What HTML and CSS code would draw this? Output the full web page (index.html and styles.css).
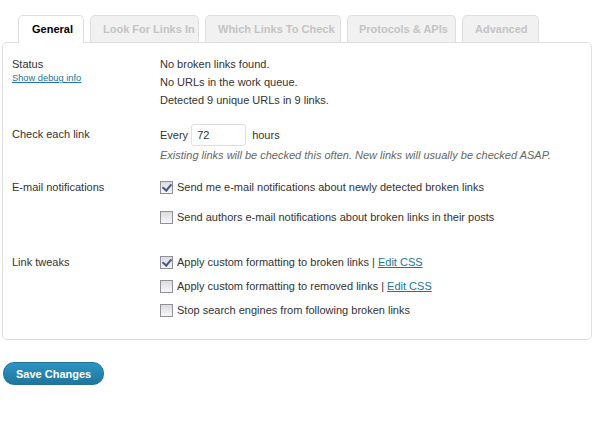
FILE: index.html
```html
<!DOCTYPE html>
<html lang="en">
<head>
    <meta charset="UTF-8">
    <title>Link Checker Settings</title>
    <link rel="stylesheet" href="styles.css">
</head>
<body>
    <div id="tabs">
        <div class="tab active">General</div>
        <div class="tab tab-look">Look For Links In</div>
        <div class="tab tab-which">Which Links To Check</div>
        <div class="tab tab-proto">Protocols &amp; APIs</div>
        <div class="tab tab-adv">Advanced</div>
    </div>

    <div id="panel">
        <div class="row row-status">
            <div class="label">
                Status
                <a href="#" class="debug">Show debug info</a>
            </div>
            <div class="value">
                <div class="line">No broken links found.</div>
                <div class="line">No URLs in the work queue.</div>
                <div class="line">Detected 9 unique URLs in 9 links.</div>
            </div>
        </div>

        <div class="row row-check">
            <div class="label">Check each link</div>
            <div class="value">
                <div class="every">
                    Every <input type="text" value="72" class="hours"> hours
                </div>
                <div class="hint">Existing links will be checked this often. New links will usually be checked ASAP.</div>
            </div>
        </div>

        <div class="row row-email">
            <div class="label">E-mail notifications</div>
            <div class="value">
                <label class="check"><span class="box checked"></span><span>Send me e-mail notifications about newly detected broken links</span></label>
                <label class="check gap"><span class="box"></span><span>Send authors e-mail notifications about broken links in their posts</span></label>
            </div>
        </div>

        <div class="row row-tweaks">
            <div class="label">Link tweaks</div>
            <div class="value">
                <label class="check"><span class="box checked"></span><span>Apply custom formatting to broken links | <a href="#">Edit CSS</a></span></label>
                <label class="check"><span class="box"></span><span>Apply custom formatting to removed links | <a href="#">Edit CSS</a></span></label>
                <label class="check"><span class="box"></span><span>Stop search engines from following broken links</span></label>
            </div>
        </div>
    </div>

    <button class="save">Save Changes</button>
</body>
</html>
```

FILE: styles.css
```css
body {
    margin: 0;
    padding: 15px 2px 0 2px;
    font-family: "Liberation Sans", Arial, sans-serif;
    font-size: 11px;
    color: #333;
    background: #fff;
}

a {
    color: #21759b;
}

#tabs {
    display: flex;
    gap: 6px;
    padding-left: 16px;
    height: 27px;
    position: relative;
    z-index: 1;
}

.tab {
    box-sizing: border-box;
    height: 27px;
    padding: 0 0 0 12px;
    border: 1px solid #dfdfdf;
    border-bottom: none;
    border-radius: 5px 5px 0 0;
    background: #f1f1f1;
    color: #c4c4c4;
    font-size: 11px;
    font-weight: bold;
    line-height: 27px;
    white-space: nowrap;
    overflow: hidden;
}

.tab.active {
    width: 66px;
    background: #fff;
    color: #000;
    height: 28px;
    padding-left: 13px;
}

.tab-look {
    width: 109px;
}

.tab-which {
    width: 136px;
}

.tab-proto {
    width: 109px;
    padding-left: 11px;
}

.tab-adv {
    width: 77px;
}

#panel {
    border: 1px solid #dfdfdf;
    border-radius: 5px;
    width: 590px;
    box-sizing: border-box;
    padding: 12px 9px 20px 9px;
}

.row {
    display: grid;
    grid-template-columns: 148px 1fr;
}

.label {
    line-height: 18px;
}

.debug {
    display: block;
    font-size: 9.3px;
    line-height: 12px;
    margin-top: -1px;
}

.line {
    line-height: 18px;
}

.row-check {
    margin-top: 15px;
}

.row-check .label {
    padding-top: 1px;
}

.every {
    display: flex;
    align-items: center;
    gap: 3px;
    height: 22px;
}

.hours {
    width: 55px;
    height: 22px;
    box-sizing: border-box;
    border: 1px solid #dfdfdf;
    border-radius: 3px;
    padding: 2px 5px;
    margin-right: 3px;
    font-family: inherit;
    font-size: 11px;
    color: #333;
}

.hint {
    font-style: italic;
    color: #666;
    line-height: 18px;
}

.row-email {
    margin-top: 14px;
}

.check {
    display: flex;
    align-items: center;
    gap: 4px;
    height: 18px;
}

.check.gap {
    margin-top: 12px;
}

.row-tweaks {
    margin-top: 27px;
}

.row-tweaks .check + .check {
    margin-top: 6px;
}

.box {
    box-sizing: border-box;
    width: 13px;
    height: 13px;
    border: 1px solid #8f8f9d;
    background: linear-gradient(#dcdcdc, #f7f7f7);
    position: relative;
    flex: none;
}

.box.checked::after {
    content: "";
    position: absolute;
    left: 3px;
    top: 0;
    width: 4px;
    height: 7px;
    border: solid #4a5a8c;
    border-width: 0 2px 2px 0;
    transform: rotate(40deg);
}

.save {
    margin: 22px 0 0 1px;
    height: 23px;
    padding: 0 12px;
    border: 1px solid #21759b;
    border-radius: 11px;
    background: linear-gradient(#2a95c5, #21759b);
    color: #fff;
    font-family: inherit;
    font-size: 11px;
    font-weight: bold;
}
```
